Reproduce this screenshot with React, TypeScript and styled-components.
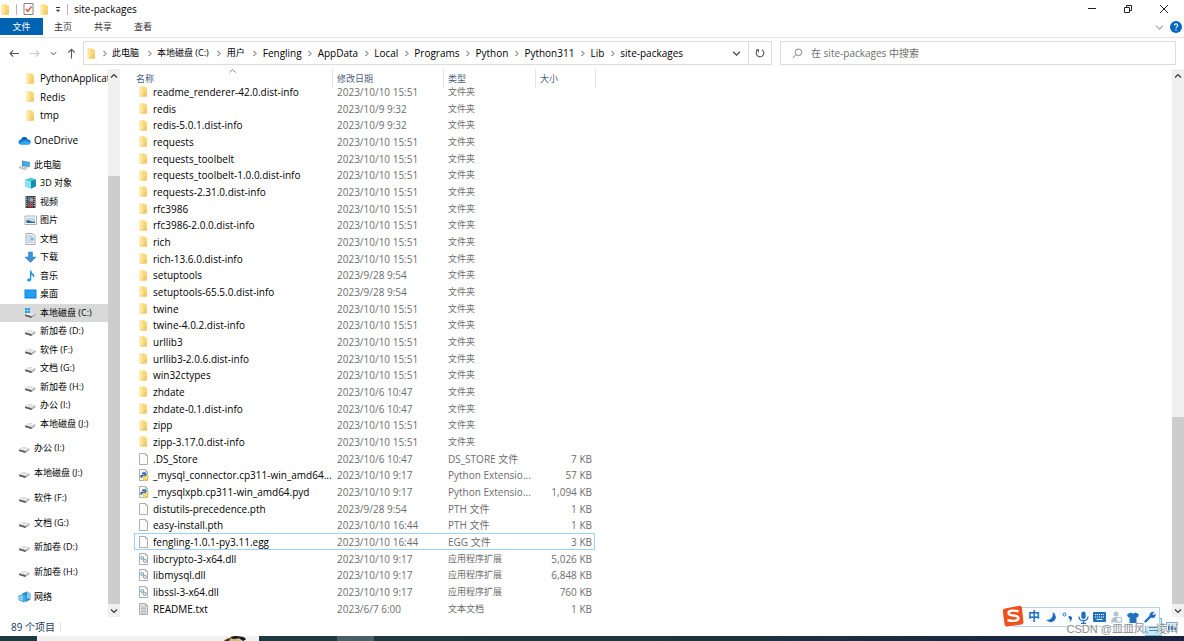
import React from 'react';
import styled, { createGlobalStyle, css } from 'styled-components';

const GlobalStyle = createGlobalStyle`
  * { box-sizing: border-box; }
  body {
    margin: 0;
    background: #fff;
    color: #000;
    font-family: "Open Sans", "Noto Sans CJK SC", sans-serif;
    font-size: 10px;
    line-height: 16px;
  }
  button, input { font: inherit; color: inherit; }
  button { border: 0; padding: 0; background: none; cursor: default; }
  a { color: inherit; text-decoration: none; }
  ul, ol { list-style: none; margin: 0; padding: 0; }
  svg { display: block; flex: none; }
`;

const Window = styled.div`
  position: relative;
  display: flex;
  flex-direction: column;
  min-height: 100vh;
  overflow: hidden;
`;

const TitleBar = styled.header`
  display: flex;
  align-items: center;
  height: 18px;
  padding-right: 15px;
`;

const QuickTools = styled.div`
  display: flex;
  align-items: center;
  gap: 6px;
  padding: 0 6px 0 1px;
`;

const Divider = styled.i`
  width: 1px;
  height: 11px;
  background: #b5b5b5;
`;

const WindowTitle = styled.h1`
  margin: 0;
  font-size: 10px;
  font-weight: 400;
  line-height: 18px;
  flex: 1;
`;

const WindowButtons = styled.div`
  display: flex;
  gap: 26px;
`;

const Ribbon = styled.nav`
  display: flex;
  align-items: flex-start;
  height: 20px;
  border-bottom: 1px solid #e3e3e3;
  font-size: 9px;
`;

const RibbonTab = styled.button<{ $primary?: boolean }>`
  width: 40px;
  height: 17px;
  color: #333;
  ${(p) => p.$primary && css`
    width: 43px;
    background: #0063b1;
    color: #fff;
  `}
`;

const RibbonEnd = styled.div`
  display: flex;
  align-items: center;
  gap: 6px;
  height: 18px;
  margin-left: auto;
  padding-right: 2px;
`;

const NavBar = styled.div`
  display: flex;
  align-items: center;
  padding: 3px 8px 4px 9px;
  height: 31px;
`;

const History = styled.div`
  display: flex;
  align-items: center;
  justify-content: space-between;
  width: 68px;
  margin-right: 6px;
`;

const AddressBox = styled.div`
  display: flex;
  align-items: center;
  flex: 684 1 0;
  height: 24px;
  border: 1px solid #dcdcdc;
  padding-left: 3px;
  min-width: 0;
`;

const Crumbs = styled.ol`
  display: flex;
  flex: 1;
  min-width: 0;
`;

const Crumb = styled.li<{ $cjk?: boolean }>`
  display: flex;
  align-items: center;
  white-space: nowrap;
  font-size: ${(p) => (p.$cjk ? 9 : 10)}px;
  padding-right: ${(p) => (p.$cjk ? 2 : 0)}px;
`;

const CrumbArrow = styled.span`
  display: flex;
  justify-content: center;
  width: 16px;
`;

const AddressButton = styled.button<{ $ruled?: boolean }>`
  display: flex;
  align-items: center;
  justify-content: center;
  width: 23px;
  height: 22px;
  border-left: ${(p) => (p.$ruled ? '1px solid #dcdcdc' : '0')};
`;

const SearchBox = styled.label`
  display: flex;
  align-items: center;
  gap: 8px;
  flex: 383 1 0;
  height: 24px;
  margin-left: 8px;
  padding-left: 11px;
  border: 1px solid #dcdcdc;
`;

const SearchInput = styled.input`
  flex: 1;
  min-width: 0;
  border: 0;
  outline: 0;
  padding: 0;
  background: none;
  &::placeholder { color: #6d6d6d; opacity: 1; }
`;

const Body = styled.div`
  display: grid;
  grid-template-columns: 108px 12px minmax(0, 1fr) 12px;
  flex: 1;
`;

const Tree = styled.nav`
  display: flex;
  flex-direction: column;
  justify-content: space-between;
  padding-bottom: 11px;
  overflow: hidden;
`;

const TreeRow = styled.li`
  height: 18px;
  &:nth-child(even) { height: 19px; }
`;

const TreeLink = styled.a<{ $child?: boolean; $selected?: boolean; $cjk?: boolean }>`
  display: flex;
  align-items: center;
  gap: 3px;
  height: 100%;
  padding-left: ${(p) => (p.$child ? 24 : 18)}px;
  white-space: nowrap;
  font-size: ${(p) => (p.$cjk ? 9 : 10)}px;
  background: ${(p) => (p.$selected ? '#d9d9d9' : 'transparent')};
`;

const IconSlot = styled.span`
  display: flex;
  flex: none;
  align-items: center;
  justify-content: center;
  width: 13px;
`;

const Scroll = styled.div`
  display: flex;
  flex-direction: column;
  background: #f0f0f0;
`;

const ScrollButton = styled.button`
  display: flex;
  align-items: center;
  justify-content: center;
  height: 13px;
`;

const Track = styled.div<{ $share: number }>`
  flex: ${(p) => p.$share} 1 0;
`;

const Thumb = styled(Track)`
  background: #cdcdcd;
`;

const Pane = styled.main`
  padding-left: 14px;
  overflow: hidden;
`;

const FileTable = styled.table`
  table-layout: fixed;
  border-collapse: separate;
  border-spacing: 0;
  width: 461px;
`;

const Head = styled.th`
  position: relative;
  height: 14px;
  padding: 0 0 0 5px;
  text-align: left;
  font-weight: 400;
  font-size: 9px;
  line-height: 14px;
  color: #4c607a;
  &:first-child { padding-left: 2px; }
  &::after {
    content: "";
    position: absolute;
    top: 0;
    right: -1px;
    width: 1px;
    height: 19px;
    background: #e5e5e5;
  }
  button { display: block; height: 14px; padding-top: 3px; }
`;

const SortMark = styled.svg`
  position: absolute;
  top: 0;
  left: 95px;
`;

const Row = styled.tr<{ $focus?: boolean }>`
  height: 17px;
  &:nth-child(3n) { height: 16px; }
  td {
    border: 0 solid #99d1ff;
    border-width: ${(p) => (p.$focus ? '1px 0' : '0')};
    line-height: ${(p) => (p.$focus ? 14 : 16)}px;
  }
  td:first-child { border-left-width: ${(p) => (p.$focus ? 1 : 0)}px; padding-left: ${(p) => (p.$focus ? 3 : 4)}px; }
  td:last-child { border-right-width: ${(p) => (p.$focus ? 1 : 0)}px; padding-right: ${(p) => (p.$focus ? 2 : 3)}px; }
`;

const Cell = styled.td<{ $cjk?: boolean; $right?: boolean }>`
  padding: 0 0 0 5px;
  color: #6d6d6d;
  white-space: nowrap;
  text-align: ${(p) => (p.$right ? 'right' : 'left')};
  font-size: ${(p) => (p.$cjk ? 9 : 10)}px;
`;

const NameCell = styled(Cell)`
  color: #000;
`;

const NameLine = styled.div`
  display: flex;
  align-items: center;
  gap: 4px;
`;

const FileIcon = styled.span`
  display: flex;
  flex: none;
  justify-content: center;
  width: 11px;
`;

const Status = styled.footer`
  display: flex;
  align-items: center;
  height: 19px;
  padding: 0 6px 0 11px;
  color: #1e395b;
`;

const StatusRule = styled.i`
  width: 1px;
  height: 10px;
  margin-left: 5px;
  background: #e4e4e4;
`;

const ViewButtons = styled.div`
  display: flex;
  align-items: center;
  gap: 4px;
  margin-left: auto;
`;

const ViewButton = styled.button<{ $on?: boolean }>`
  display: flex;
  align-items: center;
  justify-content: center;
  width: 17px;
  height: 18px;
  border: 1px solid ${(p) => (p.$on ? '#66c1ea' : 'transparent')};
  background: ${(p) => (p.$on ? '#c4e8f8' : 'none')};
  &:last-child { width: 12px; }
`;

const TaskBar = styled.div`
  display: flex;
  height: 5px;
  background: linear-gradient(90deg, #1d3a42, #20363f 50%, #17233f);
`;

const TaskSearch = styled.div`
  display: flex;
  justify-content: flex-end;
  width: 222px;
  margin-left: 37px;
  padding-right: 11px;
  background: #f1f1f1;
`;

const TaskActive = styled.div`
  width: 37px;
  margin-left: 78px;
  background: #4a5f68;
`;

const ImeBar = styled.div`
  position: absolute;
  right: 24px;
  bottom: 14px;
  display: flex;
  align-items: center;
  justify-content: space-between;
  width: 147px;
  height: 20px;
  padding: 0 3px 0 14px;
  border: 1px solid #bccfe6;
  background: #fcfdff;
`;

const ImeLogo = styled.svg`
  position: absolute;
  left: -12px;
  top: -3px;
`;

const ImeButton = styled.button`
  display: flex;
  align-items: center;
  color: #1f70c1;
  font-weight: 700;
  font-size: 12px;
`;

const Watermark = styled.div`
  position: absolute;
  right: 6px;
  bottom: 4px;
  color: #8b8b8b;
  font-family: "Liberation Sans", "Noto Sans CJK SC", sans-serif;
  font-size: 11px;
  text-shadow: 1px 1px 0 #fff;
  white-space: nowrap;
`;

const Folder = () => (
  <svg width="9" height="11" viewBox="0 0 9 11">
    <path d="M.7.5h5l.8 1H8v9H.7z" fill="#f8d775" />
    <path d="M.7.5h3v8l-3 2z" fill="#ffe6a0" />
    <path d="M5 6.500h3v4H1l4-1.200z" fill="#f2ca68" />
  </svg>
);

const Chevron = ({ dir = 'down', size = 7, color = '#444' }: { dir?: 'down' | 'up' | 'right'; size?: number; color?: string }) => {
  const paths = { down: 'M1 2.5 4 5.5 7 2.5', up: 'M1 5.5 4 2.5 7 5.5', right: 'M2.8 1 5.8 4 2.8 7' };
  return (
    <svg width={size} height={size} viewBox="0 0 8 8" fill="none" stroke={color} strokeWidth="1.1">
      <path d={paths[dir]} />
    </svg>
  );
};

const ArrowIcon = ({ kind }: { kind: 'left' | 'right' | 'up' }) => {
  const paths = {
    left: 'M4.2 2.3 1 5.5 4.2 8.700M1 5.500h9',
    right: 'M6.800 2.300 10 5.500 6.800 8.700M10 5.500H1',
    up: 'M2.300 4.500 5.500 1.200 8.700 4.500M5.500 1.200V10.500',
  };
  return (
    <svg width="11" height="11" viewBox="0 0 11 11" fill="none" stroke={kind === 'right' ? '#c9c9c9' : '#555'} strokeWidth="1.1">
      <path d={paths[kind]} />
    </svg>
  );
};

const Sheet = ({ kind }: { kind: 'blank' | 'py' | 'dll' | 'txt' }) => (
  <svg width="11" height="12" viewBox="0 0 11 12">
    <path d="M1.5.5h6l2 2v9h-8z" fill={kind === 'txt' ? '#e2e2e2' : '#fbfbfb'} stroke="#9a9a9a" strokeWidth=".8" />
    <path d="M7.5.5v2h2" fill="none" stroke="#9a9a9a" strokeWidth=".6" />
    {kind === 'txt' && <path d="M3 4h5M3 5.5h5M3 7h5M3 8.5h5M3 10h5" stroke="#a5a5a5" strokeWidth=".6" />}
    {kind === 'dll' && (
      <g fill="#e3edf4" stroke="#86a0b3" strokeWidth="1">
        <circle cx="4.2" cy="5" r="1.5" />
        <circle cx="6.8" cy="7.8" r="1.6" />
      </g>
    )}
    {kind === 'py' && (
      <g>
        <path d="M5 3.2h2.3q1.2 0 1.2 1.2v1.8q0 1-1 1H5.200q-1 0-1 1V9H3.500Q2.200 9 2.200 7.200T3.600 5.700h3V5.300H4V4.200q0-1 1-1z" fill="#3672a8" />
        <path d="M8.800 5.700h.7q1.300 0 1.300 1.700T9.500 9.300H7v.4h2v.8q0 1.200-1.900 1.200T4.900 10.500V8.700q0-1 1-1h1.900q1 0 1-1z" fill="#ffd243" />
      </g>
    )}
  </svg>
);

const Drive = ({ system }: { system?: boolean }) => (
  <svg width="13" height="12" viewBox="0 0 13 12">
    <path d="M1 7.500 5 5l6.500 1.500v1.600L7.500 11 1 9z" fill="#a9a9a9" />
    <path d="M1 7.400 5 5l6.500 1.400L7.500 9z" fill="#e6e6e6" />
    <path d="M1 7.500 7.500 9.200V11L1 9.100z" fill="#5a5a5a" />
    {system && <path d="M1 1h2.200v2.200H1zM3.700 1H6v2.200H3.700zM1 3.700h2.200v2.200H1zM3.700 3.700H6v2.200H3.700z" fill="#15a4e8" />}
  </svg>
);

const art: Record<string, React.ReactNode> = {
  cloud: (
    <>
      <path d="M3.500 10.500Q0 10.300.5 7.700.9 5.700 3 5.600 4.200 2.300 7 3q1.800.4 2.500 2.200 3.300.2 3.200 2.900-.2 2.300-2.300 2.400z" fill="#1480d8" />
      <path d="M1 9.700 7.300 6.200l5.200 2.900q-.6 1.400-2.100 1.400H3.500Q1.800 10.500 1 9.700z" fill="#30a9ec" />
      <path d="M3 5.600Q4.200 2.300 7 3q1.800.4 2.500 2.200l-2.200 1z" fill="#0c5fb0" />
    </>
  ),
  pc: (
    <>
      <path d="M4 1.500 11.800 3v5L4 7z" fill="#5f87a5" />
      <path d="M4.700 2.400 11 3.600v3.600L4.700 6.300z" fill="#35b2f0" />
      <path d="M1 8.500 4.200 7.200l5.300 1.600L7 11z" fill="#ccd5dc" stroke="#8b969e" strokeWidth=".5" />
    </>
  ),
  cube: (
    <>
      <path d="M1.500 2.800 7 1l4.800 1.600v6.600L7 11.500 1.500 9.800z" fill="#23b4ce" />
      <path d="M1.500 2.800 7 4.200v7.300L1.500 9.800z" fill="#8ae4ee" />
      <path d="M1.500 2.800 7 1l4.800 1.600L7 4.200z" fill="#45cbe0" />
      <path d="M7 4.200l4.800-1.600v6.600L7 11.500z" fill="#138da9" />
    </>
  ),
  video: (
    <>
      <path d="M1.500 0h10v12h-10z" fill="#3b3b40" />
      <path d="M4 1h5v4.500H4z" fill="#477dc0" />
      <path d="M4 6.300h5V11H4z" fill="#3c76bd" />
      <path d="M6 2.500h3v3H6z" fill="#e0ac3f" />
      <path d="M4 8.500l2-2 3 3V11H4z" fill="#b4483c" />
      <path d="M2.700 1v10M10.300 1v10" stroke="#ddd" strokeWidth="1" strokeDasharray="1 1" />
    </>
  ),
  picture: (
    <>
      <path d="M1 2h11.500v8.500H1z" fill="#fff" stroke="#9b9b9b" strokeWidth=".8" />
      <path d="M2.500 3.500h8.500v5.500H2.500z" fill="#b7dcf3" />
      <path d="M2.500 6l3 .5 2.500 1.200 3-.2V9H2.500z" fill="#34648c" />
    </>
  ),
  document: (
    <>
      <path d="M2 .5h6.500l2.500 2v9H2z" fill="#f3f6f8" stroke="#8b979f" strokeWidth=".8" />
      <path d="M3.500 3h5M3.500 5h2M3.500 7h2M3.500 9h5.500" stroke="#86a2b5" strokeWidth=".8" />
      <path d="M6.500 4.500h3v3h-3z" fill="#69b0dc" />
    </>
  ),
  download: <path d="M4.500 1h4v5H12L6.500 11.500 1 6h3.500z" fill="#3c92dd" stroke="#2676be" strokeWidth=".5" />,
  music: <path d="M6 .5h1.300Q7.500 3 9.800 4.200q1.500 1.600-.2 4Q9.700 5.500 7.300 5v4.500Q7 11.500 5 11.500T3 10q.2-1.700 3-1.700z" fill="#1c9be8" />,
  desktop: (
    <>
      <path d="M.5 1.500h12v9H.5z" fill="#1283dc" />
      <path d="M1.500 2.500h10v6.500h-10z" fill="#1fa0f4" />
    </>
  ),
  network: (
    <>
      <path d="M4 2.500 9 .5l3.500 2v6L8 11z" fill="#2a88c9" />
      <path d="M9 .5 12.500 2.500v6L9 7z" fill="#8ec8ea" />
      <path d="M.5 4.500 5.500 3l3 2v5L5.500 11.500.5 9z" fill="#46a5de" />
      <path d="M1.200 5.300 5 4.500v5.700L1.200 8.500z" fill="#85cef4" />
    </>
  ),
};

const TreeIcon = ({ name }: { name: string }) => {
  if (name === 'folder') return <Folder />;
  if (name === 'drive') return <Drive />;
  if (name === 'system') return <Drive system />;
  return <svg width="13" height="12" viewBox="0 0 13 12">{art[name]}</svg>;
};

type Node = { icon: string; label: string; child?: boolean; selected?: boolean };
const child = (icon: string, label: string, selected = false): Node => ({ icon, label, child: true, selected });

const tree: Node[][] = [
  [child('folder', 'PythonApplicat'), child('folder', 'Redis'), child('folder', 'tmp')],
  [{ icon: 'cloud', label: 'OneDrive' }],
  [
    { icon: 'pc', label: '此电脑' },
    child('cube', '3D 对象'),
    child('video', '视频'),
    child('picture', '图片'),
    child('document', '文档'),
    child('download', '下载'),
    child('music', '音乐'),
    child('desktop', '桌面'),
    child('system', '本地磁盘 (C:)', true),
    child('drive', '新加卷 (D:)'),
    child('drive', '软件 (F:)'),
    child('drive', '文档 (G:)'),
    child('drive', '新加卷 (H:)'),
    child('drive', '办公 (I:)'),
    child('drive', '本地磁盘 (J:)'),
  ],
  [{ icon: 'drive', label: '办公 (I:)' }],
  [{ icon: 'drive', label: '本地磁盘 (J:)' }],
  [{ icon: 'drive', label: '软件 (F:)' }],
  [{ icon: 'drive', label: '文档 (G:)' }],
  [{ icon: 'drive', label: '新加卷 (D:)' }],
  [{ icon: 'drive', label: '新加卷 (H:)' }],
  [{ icon: 'network', label: '网络' }],
];

const crumbs = ['此电脑', '本地磁盘 (C:)', '用户', 'Fengling', 'AppData', 'Local', 'Programs', 'Python', 'Python311', 'Lib', 'site-packages'];

const folders: [string, string][] = [
  ['readme_renderer-42.0.dist-info', '2023/10/10 15:51'],
  ['redis', '2023/10/9 9:32'],
  ['redis-5.0.1.dist-info', '2023/10/9 9:32'],
  ['requests', '2023/10/10 15:51'],
  ['requests_toolbelt', '2023/10/10 15:51'],
  ['requests_toolbelt-1.0.0.dist-info', '2023/10/10 15:51'],
  ['requests-2.31.0.dist-info', '2023/10/10 15:51'],
  ['rfc3986', '2023/10/10 15:51'],
  ['rfc3986-2.0.0.dist-info', '2023/10/10 15:51'],
  ['rich', '2023/10/10 15:51'],
  ['rich-13.6.0.dist-info', '2023/10/10 15:51'],
  ['setuptools', '2023/9/28 9:54'],
  ['setuptools-65.5.0.dist-info', '2023/9/28 9:54'],
  ['twine', '2023/10/10 15:51'],
  ['twine-4.0.2.dist-info', '2023/10/10 15:51'],
  ['urllib3', '2023/10/10 15:51'],
  ['urllib3-2.0.6.dist-info', '2023/10/10 15:51'],
  ['win32ctypes', '2023/10/10 15:51'],
  ['zhdate', '2023/10/6 10:47'],
  ['zhdate-0.1.dist-info', '2023/10/6 10:47'],
  ['zipp', '2023/10/10 15:51'],
  ['zipp-3.17.0.dist-info', '2023/10/10 15:51'],
];

type FileKind = 'blank' | 'py' | 'dll' | 'txt';
const files: [FileKind, string, string, string, string][] = [
  ['blank', '.DS_Store', '2023/10/6 10:47', 'DS_STORE 文件', '7 KB'],
  ['py', '_mysql_connector.cp311-win_amd64...', '2023/10/10 9:17', 'Python Extensio...', '57 KB'],
  ['py', '_mysqlxpb.cp311-win_amd64.pyd', '2023/10/10 9:17', 'Python Extensio...', '1,094 KB'],
  ['blank', 'distutils-precedence.pth', '2023/9/28 9:54', 'PTH 文件', '1 KB'],
  ['blank', 'easy-install.pth', '2023/10/10 16:44', 'PTH 文件', '1 KB'],
  ['blank', 'fengling-1.0.1-py3.11.egg', '2023/10/10 16:44', 'EGG 文件', '3 KB'],
  ['dll', 'libcrypto-3-x64.dll', '2023/10/10 9:17', '应用程序扩展', '5,026 KB'],
  ['dll', 'libmysql.dll', '2023/10/10 9:17', '应用程序扩展', '6,848 KB'],
  ['dll', 'libssl-3-x64.dll', '2023/10/10 9:17', '应用程序扩展', '760 KB'],
  ['txt', 'README.txt', '2023/6/7 6:00', '文本文档', '1 KB'],
];

const hasCjk = (text: string) => /[\u4e00-\u9fff]/.test(text);
const startsCjk = (text: string) => /^[\u4e00-\u9fff]/.test(text);

const ScrollBar = ({ before, thumb, after }: { before: number; thumb: number; after: number }) => (
  <Scroll>
    <ScrollButton aria-label="向上滚动"><Chevron dir="up" size={8} color="#333" /></ScrollButton>
    <Track $share={before} />
    <Thumb $share={thumb} />
    <Track $share={after} />
    <ScrollButton aria-label="向下滚动"><Chevron size={8} color="#333" /></ScrollButton>
  </Scroll>
);

export default function App() {
  return (
    <Window>
      <GlobalStyle />
      <TitleBar>
        <QuickTools>
          <Folder />
          <Divider />
          <svg width="11" height="12" viewBox="0 0 11 12">
            <path d="M1 .5h9v11H1z" fill="#fff" stroke="#777" strokeWidth=".9" />
            <path d="M2.800 6 4.800 8.300 8.500 3.500" fill="none" stroke="#e0562a" strokeWidth="1.4" />
          </svg>
          <Folder />
          <svg width="6" height="7" viewBox="0 0 6 7">
            <path d="M1 1.500h4" stroke="#333" />
            <path d="M.8 3.700h4.400L3 6z" fill="#333" />
          </svg>
          <Divider />
        </QuickTools>
        <WindowTitle>site-packages</WindowTitle>
        <WindowButtons>
          <button aria-label="最小化">
            <svg width="10" height="10" viewBox="0 0 10 10" stroke="#222"><path d="M1 4.500h8" /></svg>
          </button>
          <button aria-label="还原">
            <svg width="10" height="10" viewBox="0 0 10 10" fill="none" stroke="#222">
              <path d="M1.500 3.500h5v5h-5zM3.500 3.500v-2h5v5h-2" />
            </svg>
          </button>
          <button aria-label="关闭">
            <svg width="10" height="10" viewBox="0 0 10 10" stroke="#222"><path d="M1 1l8 8M9 1 1 9" /></svg>
          </button>
        </WindowButtons>
      </TitleBar>

      <Ribbon>
        <RibbonTab $primary>文件</RibbonTab>
        <RibbonTab>主页</RibbonTab>
        <RibbonTab>共享</RibbonTab>
        <RibbonTab>查看</RibbonTab>
        <RibbonEnd>
          <button aria-label="展开功能区"><Chevron size={9} color="#aaa" /></button>
          <button aria-label="帮助">
            <svg width="12" height="12" viewBox="0 0 12 12">
              <circle cx="6" cy="6" r="6" fill="#0a66c2" />
              <path d="M4.300 4.500Q4.300 2.900 6 2.900T7.700 4.400Q7.700 5.300 6.700 5.900 6 6.300 6 7.200M6 8.200v1.200" fill="none" stroke="#fff" strokeWidth="1.100" />
            </svg>
          </button>
        </RibbonEnd>
      </Ribbon>

      <NavBar>
        <History>
          <button aria-label="后退"><ArrowIcon kind="left" /></button>
          <button aria-label="前进"><ArrowIcon kind="right" /></button>
          <button aria-label="最近位置"><Chevron size={7} /></button>
          <button aria-label="上移"><ArrowIcon kind="up" /></button>
        </History>
        <AddressBox>
          <Folder />
          <Crumbs>
            {crumbs.map((c) => (
              <Crumb key={c} $cjk={hasCjk(c)}>
                <CrumbArrow><Chevron dir="right" size={7} /></CrumbArrow>
                <a href="#path">{c}</a>
              </Crumb>
            ))}
          </Crumbs>
          <AddressButton aria-label="历史记录"><Chevron size={9} /></AddressButton>
          <AddressButton $ruled aria-label="刷新">
            <svg width="10" height="10" viewBox="0 0 10 10" fill="none" stroke="#555" strokeWidth="1.100">
              <path d="M6.800 1.700A3.800 3.800 0 1 1 2.500 2.200M1 1.800h2.500v2.400" />
            </svg>
          </AddressButton>
        </AddressBox>
        <SearchBox>
          <svg width="11" height="11" viewBox="0 0 11 11" fill="none" stroke="#777" strokeWidth=".9">
            <circle cx="6.500" cy="4.300" r="3.300" />
            <path d="M4 6.700.7 10" />
          </svg>
          <SearchInput type="search" aria-label="搜索" placeholder="在 site-packages 中搜索" />
        </SearchBox>
      </NavBar>

      <Body>
        <Tree>
          {tree.map((group, i) => (
            <ul key={i}>
              {group.map((n) => (
                <TreeRow key={n.label}>
                  <TreeLink href="#tree" $child={n.child} $selected={n.selected} $cjk={hasCjk(n.label)}>
                    <IconSlot><TreeIcon name={n.icon} /></IconSlot>
                    {n.label}
                  </TreeLink>
                </TreeRow>
              ))}
            </ul>
          ))}
        </Tree>
        <ScrollBar before={94} thumb={429} after={0} />
        <Pane>
          <FileTable>
            <colgroup>
              <col style={{ width: 198 }} />
              <col style={{ width: 111 }} />
              <col style={{ width: 92 }} />
              <col style={{ width: 60 }} />
            </colgroup>
            <thead>
              <tr>
                <Head>
                  <button>名称</button>
                  <SortMark width="7" height="4" viewBox="0 0 7 4" fill="none" stroke="#888"><path d="M.5 3.500l3-3 3 3" /></SortMark>
                </Head>
                <Head><button>修改日期</button></Head>
                <Head><button>类型</button></Head>
                <Head><button>大小</button></Head>
              </tr>
            </thead>
            <tbody>
              {folders.map(([name, date]) => (
                <Row key={name}>
                  <NameCell><NameLine><FileIcon><Folder /></FileIcon>{name}</NameLine></NameCell>
                  <Cell>{date}</Cell>
                  <Cell $cjk>文件夹</Cell>
                  <Cell />
                </Row>
              ))}
              {files.map(([kind, name, date, type, size]) => (
                <Row key={name} $focus={name.startsWith('fengling')}>
                  <NameCell><NameLine><FileIcon><Sheet kind={kind} /></FileIcon>{name}</NameLine></NameCell>
                  <Cell>{date}</Cell>
                  <Cell $cjk={startsCjk(type)}>{type}</Cell>
                  <Cell $right>{size}</Cell>
                </Row>
              ))}
            </tbody>
          </FileTable>
        </Pane>
        <ScrollBar before={336} thumb={187} after={0} />
      </Body>

      <Status>
        89 个项目
        <StatusRule />
        <ViewButtons>
          <ViewButton $on aria-label="详细信息">
            <svg width="11" height="10" viewBox="0 0 11 10" stroke="#5b87a5"><path d="M1 2.500h9M1 5.500h9M1 8.500h9" /></svg>
          </ViewButton>
          <ViewButton aria-label="大图标">
            <svg width="12" height="10" viewBox="0 0 12 10">
              <path d="M.5.5h11v9H.5z" fill="#dce9f7" stroke="#8aa7c4" />
              <path d="M2 4h5l3 2v2H2z" fill="#3a6fa5" />
            </svg>
          </ViewButton>
        </ViewButtons>
      </Status>

      <TaskBar>
        <TaskSearch>
          <svg width="26" height="5" viewBox="0 0 26 5">
            <path d="M1 5Q6 1 14 2l6 3z" fill="#d9b878" />
            <path d="M8 1.500Q12-1 18 .5q5 0 6 3l-3 1.500-4-2.500-6 .5z" fill="#1d1d22" />
            <path d="M2 5Q5 2 9 2l-2 3z" fill="#3a3330" />
          </svg>
        </TaskSearch>
        <TaskActive />
      </TaskBar>

      <ImeBar>
        <ImeLogo width="22" height="22" viewBox="0 0 22 22">
          <path d="M3 3.500 17.500.8q2-.2 2.400 1.700L21.500 17q.2 2-1.800 2.400L5 21.500q-2 .2-2.400-1.700L.8 6Q.8 3.900 3 3.500z" fill="#f0501e" />
          <path d="M16.500 6.200Q7 4.500 6.500 7.900q0 2 5 2.600t5 2.900Q16 17 5.500 15.300" fill="none" stroke="#fff" strokeWidth="2.400" />
        </ImeLogo>
        <ImeButton>中</ImeButton>
        <ImeButton aria-label="半角">
          <svg width="12" height="12" viewBox="0 0 12 12"><path d="M8 1q5 4 1.500 8.500Q5.500 13 1 9q7 .5 7-8z" fill="#1f70c1" /></svg>
        </ImeButton>
        <ImeButton aria-label="标点">
          <svg width="11" height="12" viewBox="0 0 11 12">
            <circle cx="2.500" cy="3.500" r="1.500" fill="none" stroke="#1f70c1" />
            <path d="M7 5q2.500-.5 3 1.500.3 3-2.800 4.500Q8.500 9.500 8.200 8.500 6.500 8 6.500 6.500T7 5z" fill="#1f70c1" />
          </svg>
        </ImeButton>
        <ImeButton aria-label="语音">
          <svg width="11" height="13" viewBox="0 0 11 13">
            <rect x="3.300" y=".5" width="4.400" height="7.500" rx="2.200" fill="#1f70c1" />
            <path d="M1 5.500q0 4.200 4.500 4.200T10 5.500M5.500 9.700v2.600M3 12.300h5" fill="none" stroke="#1f70c1" strokeWidth="1.200" />
          </svg>
        </ImeButton>
        <ImeButton aria-label="键盘">
          <svg width="13" height="10" viewBox="0 0 13 10">
            <rect width="13" height="10" rx="1" fill="#1f70c1" />
            <path d="M2 2.500h9M2 5h9" stroke="#fff" strokeDasharray="1.200 .8" />
            <path d="M3.500 7.500h6" stroke="#fff" />
          </svg>
        </ImeButton>
        <ImeButton aria-label="账户">
          <svg width="11" height="12" viewBox="0 0 11 12">
            <circle cx="5" cy="3" r="2.500" fill="#b4c2d6" />
            <path d="M0 11.500Q0 6 5 6t5.500 5.500z" fill="#b4c2d6" />
            <path d="M5.500 6.500h5v4.500h-5z" fill="#f4f7fb" stroke="#a6b6cc" strokeWidth=".8" />
          </svg>
        </ImeButton>
        <ImeButton aria-label="皮肤">
          <svg width="12" height="11" viewBox="0 0 12 11"><path d="M3.500.5Q6 2.500 8.500.5L12 2.500 10.800 5.500 9.500 5v6h-7V5l-1.300.5L0 2.500z" fill="#1f70c1" /></svg>
        </ImeButton>
        <ImeButton aria-label="工具">
          <svg width="12" height="12" viewBox="0 0 12 12">
            <path d="M1.500 10.500 6.800 5.200" stroke="#1f70c1" strokeWidth="2.400" strokeLinecap="round" />
            <path d="M10.500 1 8.500 3l.8 1 2.200-1.500Q12.200 5.500 10 6.700 7.500 7.500 6 5.700 4.800 3.500 6.500 1.700 8.300.2 10.500 1z" fill="#1f70c1" />
          </svg>
        </ImeButton>
      </ImeBar>
      <Watermark>CSDN @皿皿风、凌川</Watermark>
    </Window>
  );
}
